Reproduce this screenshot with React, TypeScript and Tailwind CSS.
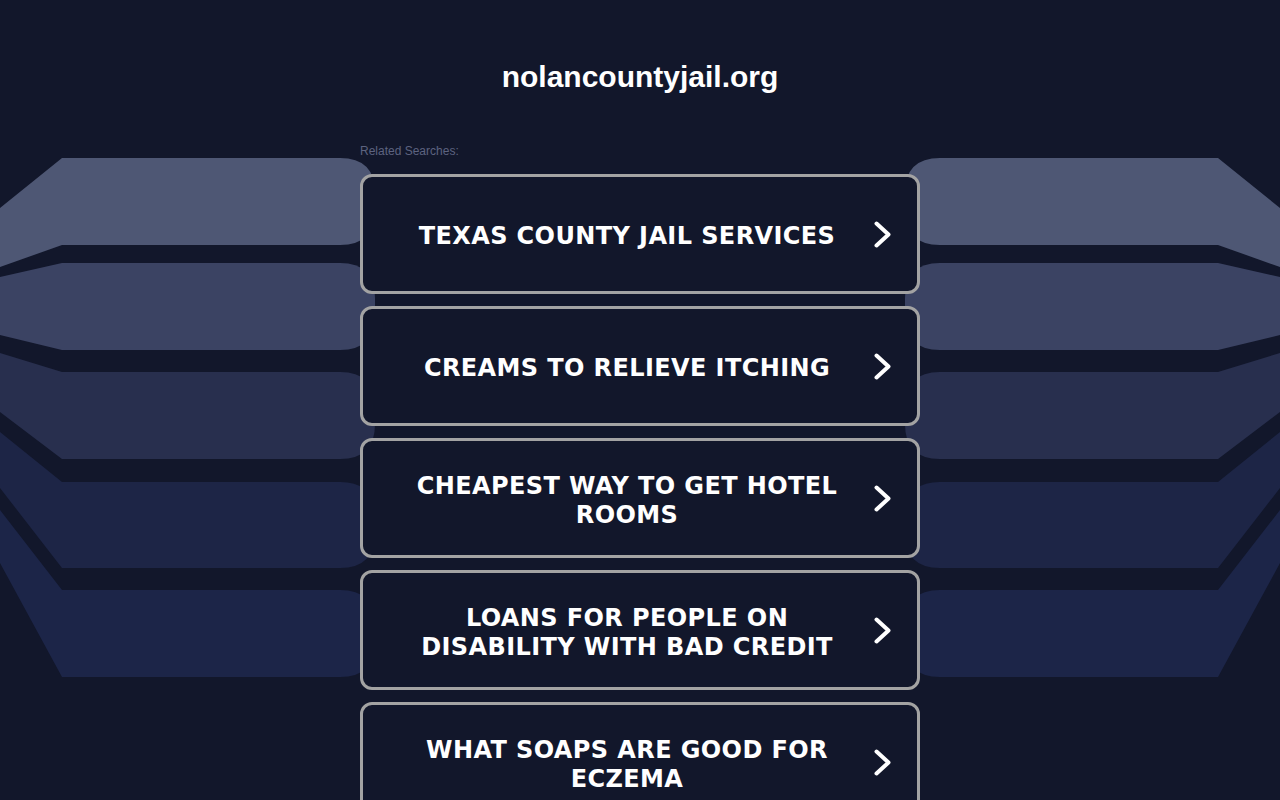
import React from 'react'

const searches = [
  'Texas County Jail Services',
  'Creams to Relieve Itching',
  'Cheapest Way to Get Hotel Rooms',
  'Loans for People on Disability with Bad Credit',
  'What Soaps Are Good for Eczema',
]

// left-side band geometry: [topAtEdge, top, bottom, bottomAtEdge, fill]
const bands: [number, number, number, number, string][] = [
  [208, 158, 245, 267, '#4e5774'],
  [277, 263, 350, 335, '#3b4363'],
  [353, 372, 459, 412, '#282f4e'],
  [432, 482, 568, 488, '#1d2546'],
  [510, 590, 677, 563, '#1c2548'],
]

function bandPath([t0, t, b, b0]: [number, number, number, number, string]) {
  return `M0 ${t0} L62 ${t} L340 ${t} Q375 ${t} 375 ${t + 35} L375 ${b - 35} Q375 ${b} 340 ${b} L62 ${b} L0 ${b0} Z`
}

function Backdrop() {
  return (
    <svg className="absolute inset-0 w-[1280px] h-[800px]" viewBox="0 0 1280 800" aria-hidden>
      {bands.map((b) => (
        <path key={b[1]} d={bandPath(b)} fill={b[4]} />
      ))}
      <g transform="translate(1280,0) scale(-1,1)">
        {bands.map((b) => (
          <path key={b[1]} d={bandPath(b)} fill={b[4]} />
        ))}
      </g>
    </svg>
  )
}

function Chevron() {
  return (
    <svg width="17" height="27" viewBox="0 0 17 27" className="shrink-0">
      <polyline points="2.5,2.5 14.5,13.5 2.5,24.5" fill="none" stroke="white" strokeWidth="4" strokeLinecap="round" strokeLinejoin="round" />
    </svg>
  )
}

export default function App() {
  return (
    <div className="relative min-h-[800px] w-full overflow-hidden bg-[#12172b]">
      <Backdrop />
      <div className="relative flex flex-col items-center">
        <h1 className="pt-[59px] text-[30px] leading-[36px] font-bold text-white font-['Liberation_Sans',Arial,sans-serif]">
          nolancountyjail.org
        </h1>
        <div className="w-[560px] mt-[49px]">
          <p className="text-[12px] leading-[14px] text-[#5d6380] font-['Liberation_Sans',Arial,sans-serif]">
            Related Searches:
          </p>
          <div className="mt-[16px] flex flex-col gap-[12px]">
            {searches.map((s) => (
              <a
                key={s}
                href="#"
                className="flex h-[120px] items-center rounded-[12px] border-[3px] border-[#a3a3a3] bg-[#12172b] pl-[44px] pr-[26px]"
              >
                <span className="w-[440px] pt-[5px] text-center text-[24px] leading-[29px] tracking-[0.4px] font-bold uppercase text-white font-['DejaVu_Sans',Verdana,sans-serif]">
                  {s}
                </span>
                <span className="ml-[27px] flex">
                  <Chevron />
                </span>
              </a>
            ))}
          </div>
        </div>
      </div>
    </div>
  )
}
